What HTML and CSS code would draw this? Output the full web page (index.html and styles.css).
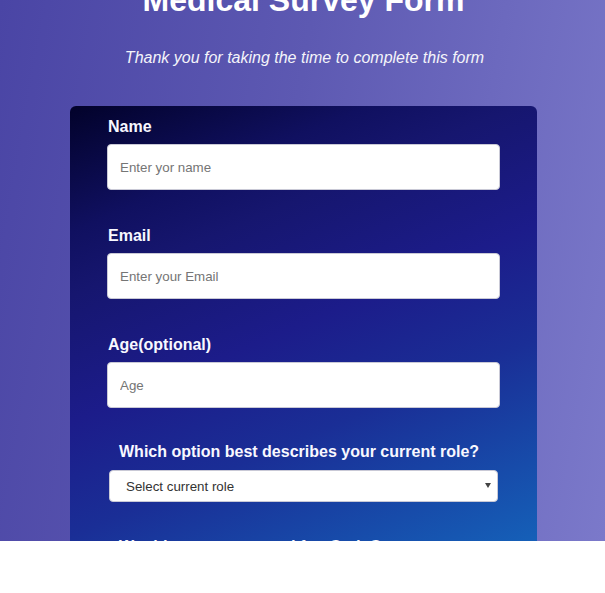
FILE: index.html
```html
<!DOCTYPE html>
<html lang="en">
<head>
<meta charset="utf-8">
<title>Medical Survey Form</title>
<link rel="stylesheet" href="styles.css">
</head>
<body>
<div class="page">
  <header class="header">
    <h1 class="title" id="title">Medical Survey Form</h1>
    <p class="subtitle" id="description">Thank you for taking the time to complete this form</p>
  </header>
  <form class="card" id="survey-form">
    <div class="field">
      <label class="label" for="name">Name</label>
      <input class="input" id="name" type="text" placeholder="Enter yor name">
    </div>
    <div class="field">
      <label class="label" for="email">Email</label>
      <input class="input" id="email" type="email" placeholder="Enter your Email">
    </div>
    <div class="field">
      <label class="label" for="number">Age(optional)</label>
      <input class="input" id="number" type="number" placeholder="Age">
    </div>
    <div class="field field--question field--select">
      <p class="question">Which option best describes your current role?</p>
      <div class="select-wrap">
        <select class="select" id="dropdown">
          <option>Select current role</option>
          <option>Student</option>
          <option>Full Time Job</option>
          <option>Prefer not to say</option>
        </select>
        <svg class="select-arrow" width="6" height="5" viewBox="0 0 6 5" aria-hidden="true"><path d="M0 0H6L3 5Z" fill="#444444"/></svg>
      </div>
    </div>
    <div class="field field--question">
      <p class="question">Would you recommend freeCodeCamp to a friend?</p>
    </div>
  </form>
</div>
</body>
</html>
```
FILE: styles.css
```css
* {
  box-sizing: border-box;
}

body {
  margin: 0;
  background: #ffffff;
  font-family: "Liberation Sans", Arial, sans-serif;
}

.page {
  height: 541px;
  overflow: hidden;
  background: linear-gradient(100deg, #4a45a5 0%, #5d59b2 45%, #7b79ca 100%);
  color: #ffffff;
}

.header {
  text-align: center;
  padding-left: 2px;
}

.title {
  margin: -18px 0 0;
  font-size: 32px;
  line-height: 37px;
  font-weight: bold;
  color: #ffffff;
}

.subtitle {
  margin: 30px 0 0;
  padding-left: 2px;
  font-size: 16px;
  line-height: 18px;
  font-style: italic;
  color: #f4f4fa;
}

.card {
  width: 467px;
  margin: 39px 0 0 70px;
  padding: 12px 37px 40px;
  border-radius: 6px;
  background-color: #1560b8;
  background-image: linear-gradient(157deg, #02022a 0%, #101060 20%, #16166f 30%, #1c1c8a 50%, #1a2e96 68%, #1560b8 100%);
  background-size: 100% 435px;
  background-repeat: no-repeat;
  display: flex;
  flex-direction: column;
}

.field {
  display: flex;
  flex-direction: column;
  margin-bottom: 37px;
}

.field--question {
  margin-top: -2px;
}

.field--select {
  margin-bottom: 38px;
}

.label {
  display: block;
  padding-left: 1px;
  font-size: 16px;
  line-height: 18px;
  font-weight: bold;
  color: #f8f8ff;
  margin-bottom: 8px;
}

.input {
  width: 393px;
  height: 46px;
  padding: 0 12px;
  border: 1px solid #c9c9d6;
  border-radius: 4px;
  background: #ffffff;
  font-family: "Liberation Sans", Arial, sans-serif;
  font-size: 13.33px;
  color: #333333;
  outline: none;
}

.input::placeholder {
  color: #757575;
}

.question {
  margin: 0 0 9px;
  padding-left: 12px;
  font-size: 16px;
  line-height: 18px;
  font-weight: bold;
  color: #f8f8ff;
}

.select-wrap {
  position: relative;
  width: 389px;
  margin-left: 2px;
}

.select {
  -webkit-appearance: none;
  appearance: none;
  display: block;
  width: 100%;
  height: 32px;
  padding: 0 24px 0 16px;
  border: 1px solid #c9c9d6;
  border-radius: 4px;
  background: #ffffff;
  font-family: "Liberation Sans", Arial, sans-serif;
  font-size: 13.33px;
  color: #333333;
  outline: none;
}

.select-arrow {
  position: absolute;
  right: 7px;
  top: 13px;
  pointer-events: none;
}
```
